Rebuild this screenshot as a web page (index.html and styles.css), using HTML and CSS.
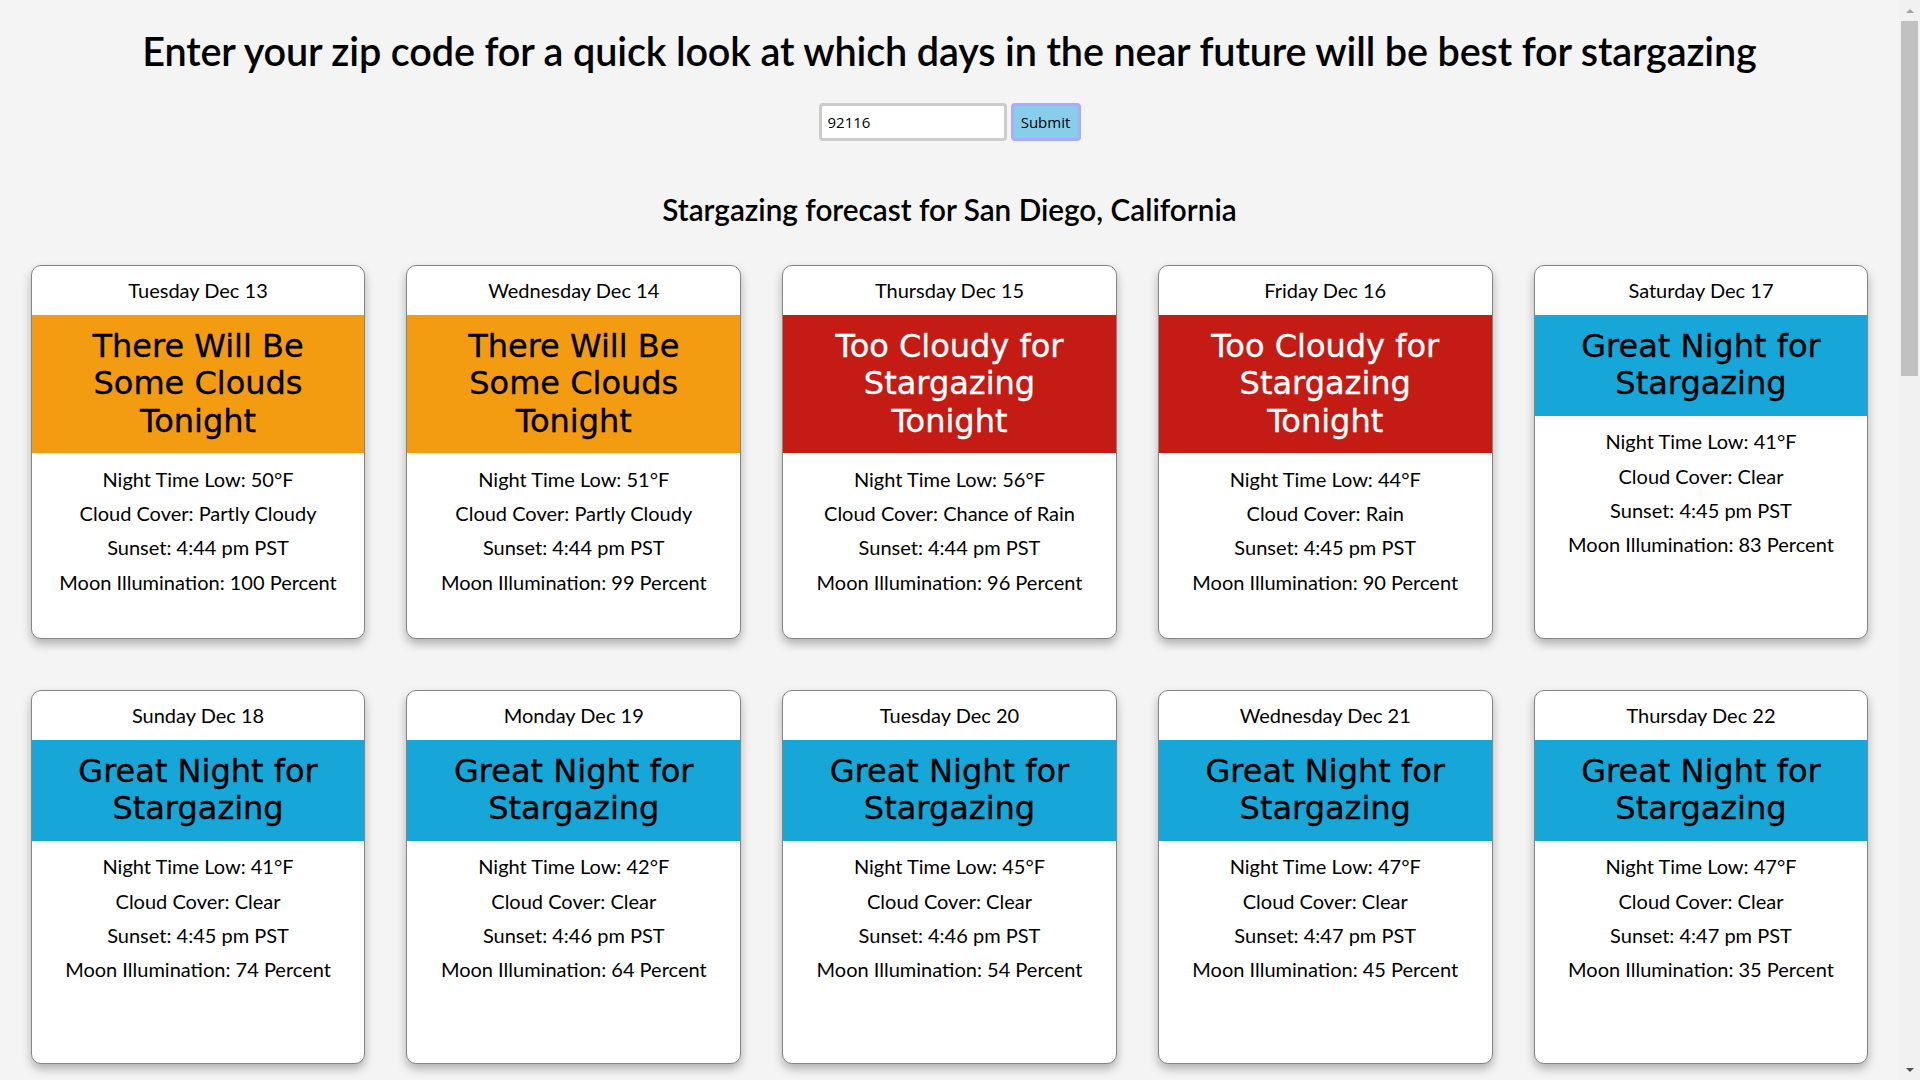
FILE: index.html
```html
<!DOCTYPE html>
<html lang="en">
<head>
<meta charset="utf-8">
<title>Stargazing Forecast</title>
<link rel="stylesheet" href="styles.css">
</head>
<body>
<div class="page">
  <main class="main">
    <h1 class="title">Enter your zip code for a quick look at which days in the near future will be best for stargazing</h1>
    <form class="zip-form">
      <input class="zip-input" type="text" value="92116">
      <button class="zip-submit" type="button">Submit</button>
    </form>
    <h2 class="subtitle">Stargazing forecast for San Diego, California</h2>
    <section class="cards">
      <article class="card">
        <div class="card-date">Tuesday Dec 13</div>
        <h3 class="verdict verdict-some">There Will Be Some Clouds Tonight</h3>
        <div class="card-body">
          <p>Night Time Low: 50°F</p>
          <p>Cloud Cover: Partly Cloudy</p>
          <p>Sunset: 4:44 pm PST</p>
          <p>Moon Illumination: 100 Percent</p>
        </div>
      </article>
      <article class="card">
        <div class="card-date">Wednesday Dec 14</div>
        <h3 class="verdict verdict-some">There Will Be Some Clouds Tonight</h3>
        <div class="card-body">
          <p>Night Time Low: 51°F</p>
          <p>Cloud Cover: Partly Cloudy</p>
          <p>Sunset: 4:44 pm PST</p>
          <p>Moon Illumination: 99 Percent</p>
        </div>
      </article>
      <article class="card">
        <div class="card-date">Thursday Dec 15</div>
        <h3 class="verdict verdict-bad">Too Cloudy for Stargazing Tonight</h3>
        <div class="card-body">
          <p>Night Time Low: 56°F</p>
          <p>Cloud Cover: Chance of Rain</p>
          <p>Sunset: 4:44 pm PST</p>
          <p>Moon Illumination: 96 Percent</p>
        </div>
      </article>
      <article class="card">
        <div class="card-date">Friday Dec 16</div>
        <h3 class="verdict verdict-bad">Too Cloudy for Stargazing Tonight</h3>
        <div class="card-body">
          <p>Night Time Low: 44°F</p>
          <p>Cloud Cover: Rain</p>
          <p>Sunset: 4:45 pm PST</p>
          <p>Moon Illumination: 90 Percent</p>
        </div>
      </article>
      <article class="card">
        <div class="card-date">Saturday Dec 17</div>
        <h3 class="verdict verdict-great">Great Night for Stargazing</h3>
        <div class="card-body">
          <p>Night Time Low: 41°F</p>
          <p>Cloud Cover: Clear</p>
          <p>Sunset: 4:45 pm PST</p>
          <p>Moon Illumination: 83 Percent</p>
        </div>
      </article>
      <article class="card">
        <div class="card-date">Sunday Dec 18</div>
        <h3 class="verdict verdict-great">Great Night for Stargazing</h3>
        <div class="card-body">
          <p>Night Time Low: 41°F</p>
          <p>Cloud Cover: Clear</p>
          <p>Sunset: 4:45 pm PST</p>
          <p>Moon Illumination: 74 Percent</p>
        </div>
      </article>
      <article class="card">
        <div class="card-date">Monday Dec 19</div>
        <h3 class="verdict verdict-great">Great Night for Stargazing</h3>
        <div class="card-body">
          <p>Night Time Low: 42°F</p>
          <p>Cloud Cover: Clear</p>
          <p>Sunset: 4:46 pm PST</p>
          <p>Moon Illumination: 64 Percent</p>
        </div>
      </article>
      <article class="card">
        <div class="card-date">Tuesday Dec 20</div>
        <h3 class="verdict verdict-great">Great Night for Stargazing</h3>
        <div class="card-body">
          <p>Night Time Low: 45°F</p>
          <p>Cloud Cover: Clear</p>
          <p>Sunset: 4:46 pm PST</p>
          <p>Moon Illumination: 54 Percent</p>
        </div>
      </article>
      <article class="card">
        <div class="card-date">Wednesday Dec 21</div>
        <h3 class="verdict verdict-great">Great Night for Stargazing</h3>
        <div class="card-body">
          <p>Night Time Low: 47°F</p>
          <p>Cloud Cover: Clear</p>
          <p>Sunset: 4:47 pm PST</p>
          <p>Moon Illumination: 45 Percent</p>
        </div>
      </article>
      <article class="card">
        <div class="card-date">Thursday Dec 22</div>
        <h3 class="verdict verdict-great">Great Night for Stargazing</h3>
        <div class="card-body">
          <p>Night Time Low: 47°F</p>
          <p>Cloud Cover: Clear</p>
          <p>Sunset: 4:47 pm PST</p>
          <p>Moon Illumination: 35 Percent</p>
        </div>
      </article>
    </section>
  </main>
  <aside class="scrollbar" aria-hidden="true">
    <div class="scroll-arrow scroll-up"></div>
    <div class="scroll-thumb"></div>
    <div class="scroll-track"></div>
    <div class="scroll-arrow scroll-down"></div>
  </aside>
</div>
</body>
</html>
```

FILE: styles.css
```css
html, body {
  margin: 0;
  padding: 0;
  height: 100%;
  overflow: hidden;
}

body {
  background: #f4f4f4;
  font-family: "Lato", "Liberation Sans", sans-serif;
  color: #000;
}

.page {
  display: flex;
  height: 1080px;
  overflow: hidden;
}

.main {
  width: 1899px;
  flex: 0 0 1899px;
  text-align: center;
}

.title {
  margin: 0;
  padding-top: 26.5px;
  font-size: 39.6px;
  line-height: 48px;
  font-weight: 600;
  letter-spacing: -0.15px;
}

.zip-form {
  display: flex;
  justify-content: center;
  gap: 4px;
  margin-top: 28px;
}

.zip-input {
  box-sizing: border-box;
  width: 188px;
  height: 38px;
  border: 3px solid #cccccc;
  border-radius: 4px;
  background: #fff;
  padding: 0 6px;
  font-family: "Open Sans", "Noto Sans", sans-serif;
  font-size: 15px;
  color: #000;
  outline: none;
}

.zip-submit {
  box-sizing: border-box;
  width: 70px;
  height: 38px;
  border: 3px solid #aaaaff;
  border-radius: 4px;
  background: #87ceeb;
  font-family: "Open Sans", "Noto Sans", sans-serif;
  font-size: 15px;
  color: #000;
  padding: 0;
}

.subtitle {
  margin: 51px 0 0;
  font-size: 29.7px;
  line-height: 36px;
  font-weight: 600;
}

.cards {
  display: grid;
  grid-template-columns: repeat(5, 334.6px);
  grid-auto-rows: 373.7px;
  column-gap: 41.15px;
  row-gap: 51.3px;
  justify-content: center;
  margin-top: 37.5px;
}

.card {
  box-sizing: border-box;
  background: #fff;
  border: 1px solid #858585;
  border-radius: 10px;
  box-shadow: 0 5px 10px rgba(0, 0, 0, 0.28);
  overflow: hidden;
  display: flex;
  flex-direction: column;
}

.card-date {
  font-size: 20px;
  line-height: 24px;
  padding: 12.35px 0;
}

.verdict {
  margin: 0;
  padding: 13.2px 20px;
  font-family: "DejaVu Sans", "Verdana", sans-serif;
  font-weight: 400;
  font-size: 32px;
  line-height: 37.33px;
  color: #000;
  -webkit-text-stroke: 0.35px currentColor;
}

.verdict-some {
  background: #f39c12;
}

.verdict-bad {
  background: #c41b15;
  color: #fff;
}

.verdict-great {
  background: #16a6d8;
}

.card-body {
  padding-top: 8.7px;
}

.card-body p {
  margin: 0;
  font-size: 20px;
  line-height: 34.33px;
}

.scrollbar {
  flex: 0 0 21px;
  width: 21px;
  height: 1080px;
  background: #f1f1f1;
  display: flex;
  flex-direction: column;
  align-items: center;
}

.scroll-arrow {
  flex: 0 0 21px;
  width: 21px;
  display: flex;
  align-items: center;
  justify-content: center;
}

.scroll-up::before {
  content: "";
  border-left: 4.5px solid transparent;
  border-right: 4.5px solid transparent;
  border-bottom: 4.5px solid #a3a3a3;
}

.scroll-down::before {
  content: "";
  border-left: 4.5px solid transparent;
  border-right: 4.5px solid transparent;
  border-top: 4.5px solid #505050;
}

.scroll-thumb {
  flex: 0 0 355px;
  width: 17px;
  background: #c1c1c1;
}

.scroll-track {
  flex: 1 1 auto;
}
```
